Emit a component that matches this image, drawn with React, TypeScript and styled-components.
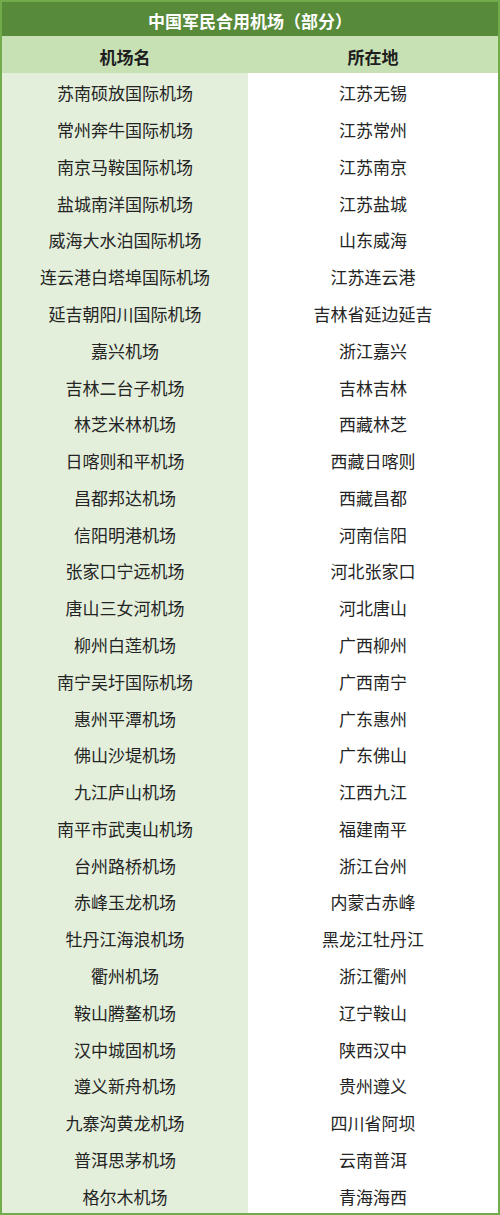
import React from "react";
import styled, { createGlobalStyle } from "styled-components";

const GlobalStyle = createGlobalStyle`
  html, body {
    margin: 0;
    padding: 0;
    background: #ffffff;
  }
  body {
    font-family: "Noto Sans CJK SC", "Noto Sans", sans-serif;
  }
`;

const rows: [string, string][] = [
  ["苏南硕放国际机场", "江苏无锡"],
  ["常州奔牛国际机场", "江苏常州"],
  ["南京马鞍国际机场", "江苏南京"],
  ["盐城南洋国际机场", "江苏盐城"],
  ["威海大水泊国际机场", "山东威海"],
  ["连云港白塔埠国际机场", "江苏连云港"],
  ["延吉朝阳川国际机场", "吉林省延边延吉"],
  ["嘉兴机场", "浙江嘉兴"],
  ["吉林二台子机场", "吉林吉林"],
  ["林芝米林机场", "西藏林芝"],
  ["日喀则和平机场", "西藏日喀则"],
  ["昌都邦达机场", "西藏昌都"],
  ["信阳明港机场", "河南信阳"],
  ["张家口宁远机场", "河北张家口"],
  ["唐山三女河机场", "河北唐山"],
  ["柳州白莲机场", "广西柳州"],
  ["南宁吴圩国际机场", "广西南宁"],
  ["惠州平潭机场", "广东惠州"],
  ["佛山沙堤机场", "广东佛山"],
  ["九江庐山机场", "江西九江"],
  ["南平市武夷山机场", "福建南平"],
  ["台州路桥机场", "浙江台州"],
  ["赤峰玉龙机场", "内蒙古赤峰"],
  ["牡丹江海浪机场", "黑龙江牡丹江"],
  ["衢州机场", "浙江衢州"],
  ["鞍山腾鳌机场", "辽宁鞍山"],
  ["汉中城固机场", "陕西汉中"],
  ["遵义新舟机场", "贵州遵义"],
  ["九寨沟黄龙机场", "四川省阿坝"],
  ["普洱思茅机场", "云南普洱"],
  ["格尔木机场", "青海海西"],
];

const Frame = styled.div`
  box-sizing: border-box;
  width: 500px;
  height: 1215px;
  border: 2px solid #72ab4c;
  display: flex;
  flex-direction: column;
  font-family: "Noto Sans CJK SC", "Noto Sans", sans-serif;
`;

const TitleBar = styled.div`
  height: 34px;
  background: #578a39;
  color: #ffffff;
  font-size: 17px;
  font-weight: 700;
  display: flex;
  align-items: center;
  justify-content: center;
  padding-top: 2px;
  box-sizing: border-box;
`;

const HeadRow = styled.div`
  height: 37px;
  background: #c7e1b5;
  display: grid;
  grid-template-columns: 246px 1fr;
`;

const HeadCell = styled.div`
  display: flex;
  align-items: center;
  justify-content: center;
  font-size: 17px;
  font-weight: 700;
  color: #1e1e1e;
  padding-top: 3px;
  box-sizing: border-box;
`;

const Body = styled.div`
  flex: 1;
  display: grid;
  grid-template-columns: 246px 1fr;
  grid-template-rows: repeat(31, 1fr);
`;

const Cell = styled.div<{ $tint: boolean }>`
  display: flex;
  align-items: center;
  justify-content: center;
  background: ${(p) => (p.$tint ? "#e3efdb" : "#ffffff")};
  font-size: 17px;
  color: #242424;
  padding-top: 3px;
  box-sizing: border-box;
  white-space: nowrap;
`;

export default function App() {
  return (
    <>
      <GlobalStyle />
      <Frame>
        <TitleBar>中国军民合用机场（部分）</TitleBar>
        <HeadRow>
          <HeadCell>机场名</HeadCell>
          <HeadCell>所在地</HeadCell>
        </HeadRow>
        <Body>
          {rows.map(([name, place]) => (
            <React.Fragment key={name}>
              <Cell $tint>{name}</Cell>
              <Cell $tint={false}>{place}</Cell>
            </React.Fragment>
          ))}
        </Body>
      </Frame>
    </>
  );
}
